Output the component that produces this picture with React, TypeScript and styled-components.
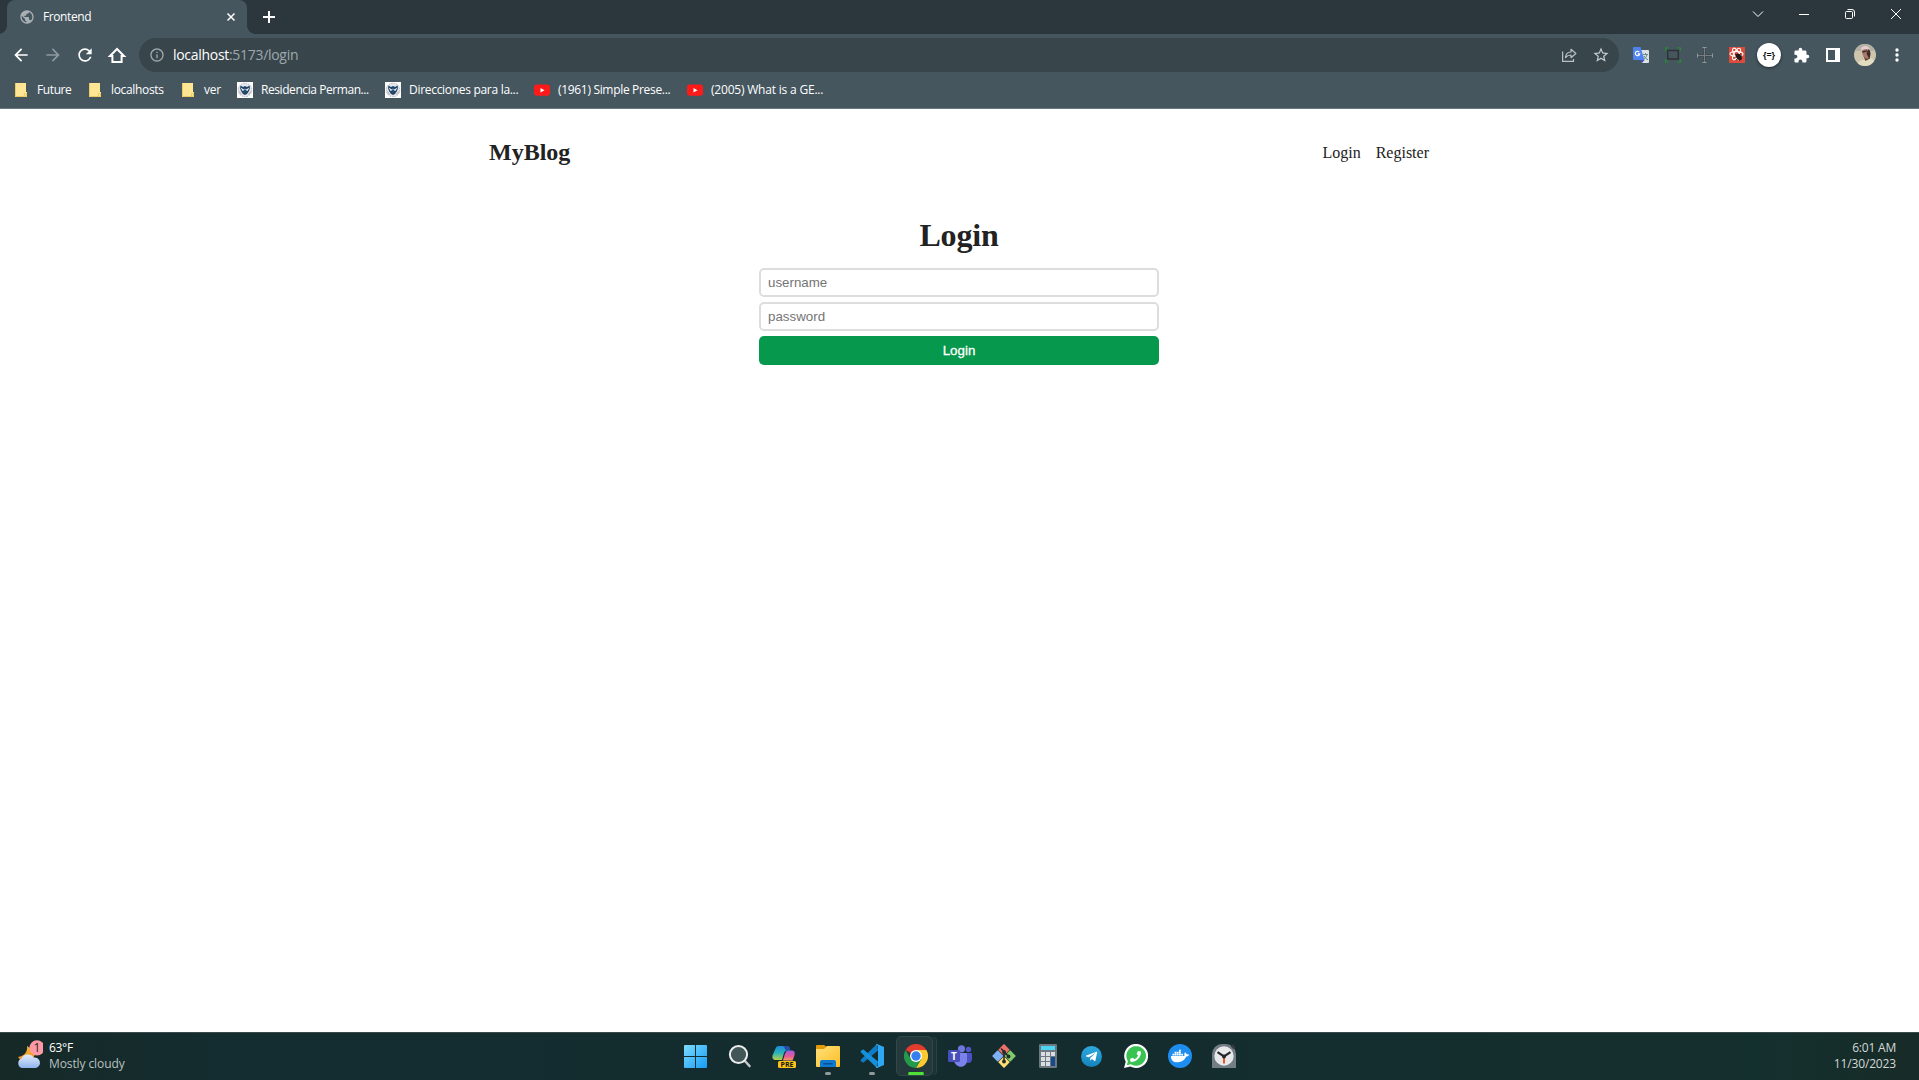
import React from "react";
import styled, { createGlobalStyle } from "styled-components";
import {
  MdArrowBack,
  MdArrowForward,
  MdExtension,
  MdInfoOutline,
  MdPublic,
  MdRefresh,
  MdStarBorder,
} from "react-icons/md";
import { FaDocker, FaPhoneAlt, FaTelegramPlane } from "react-icons/fa";

const uiFont = `"Open Sans", "Noto Sans", sans-serif`;

const GlobalStyle = createGlobalStyle`
  *, *::before, *::after { box-sizing: border-box; }
  body { margin: 0; background: #fff; overflow: hidden; }
  svg { display: block; flex: none; }
`;

const Screen = styled.div`
  display: flex;
  flex-direction: column;
  height: 100vh;
`;

/* ---------- browser window ---------- */

const TabStrip = styled.div`
  display: flex;
  height: 34px;
  flex: none;
  padding-left: 7px;
  background: #2c373d;
  font-family: ${uiFont};
`;

const Tab = styled.div`
  position: relative;
  display: flex;
  align-items: center;
  width: 240px;
  padding: 0 10px 0 12px;
  background: #45565f;
  border-radius: 8px 8px 0 0;
  color: #fff;
  font-size: 12px;
  &::before, &::after {
    content: "";
    position: absolute;
    bottom: 0;
    width: 8px;
    height: 8px;
  }
  &::before { left: -8px; background: radial-gradient(circle at 0 0, #2c373d 7.5px, #45565f 8px); }
  &::after { right: -8px; background: radial-gradient(circle at 100% 0, #2c373d 7.5px, #45565f 8px); }
`;

const Label = styled.span<{ $spacing?: number }>`
  white-space: nowrap;
  letter-spacing: ${(p) => p.$spacing ?? 0}px;
  font-size: 12px;
`;

const TabTitle = styled(Label)`
  flex: 1;
  margin-left: 8px;
  line-height: 16px;
`;

const NewTab = styled.div`
  display: grid;
  place-items: center;
  width: 28px;
  height: 28px;
  margin: 3px 0 0 8px;
`;

const WindowButtons = styled.div`
  display: flex;
  height: 28px;
  margin-left: auto;
`;

const WindowButton = styled.div`
  display: grid;
  place-items: center;
  width: 46px;
`;

const Toolbar = styled.div`
  display: flex;
  align-items: center;
  flex: none;
  height: 38px;
  padding: 4px 6px 0 5px;
  background: #45565f;
  font-family: ${uiFont};
`;

const ToolButton = styled.div<{ $color?: string }>`
  display: grid;
  place-items: center;
  width: 32px;
  height: 34px;
  flex: none;
  color: ${(p) => p.$color ?? "#fff"};
`;

const Omnibox = styled.div`
  display: flex;
  align-items: center;
  flex: 1;
  height: 34px;
  margin: 0 6px;
  padding: 0 2px 0 10px;
  background: #38454b;
  border-radius: 17px;
  color: #9fa8ad;
`;

const Url = styled.span`
  flex: 1;
  margin-left: 8px;
  font-size: 14px;
  letter-spacing: -0.3px;
  line-height: 20px;
  b { font-weight: 400; color: #fff; }
`;

const Badge = styled.div`
  display: grid;
  place-items: center;
  width: 24px;
  height: 24px;
  border-radius: 50%;
  background: #fff;
  box-shadow: 0 1px 3px #0008;
  color: #111;
  font: 700 9px ${uiFont};
  line-height: 22px;
`;

const Bookmarks = styled.div`
  display: flex;
  flex: none;
  height: 37px;
  padding: 0 15px 1px;
  background: #45565f;
  border-bottom: 1px solid #6a7a82;
  font-family: ${uiFont};
  color: #fff;
`;

const Bookmark = styled.div<{ $width: number; $gap: number }>`
  display: flex;
  align-items: center;
  gap: ${(p) => p.$gap}px;
  width: ${(p) => p.$width}px;
  flex: none;
`;

/* ---------- blog page ---------- */

const Page = styled.main`
  flex: 1;
  width: 961px;
  margin: 0 auto;
  padding: 28px 11px 0 10px;
  font-family: "Liberation Serif", serif;
  color: #222;
`;

const PageHeader = styled.header`
  display: flex;
  justify-content: space-between;
  align-items: center;
  height: 30px;
  margin-bottom: 50px;
`;

const Logo = styled.a`
  font-size: 24px;
  font-weight: 700;
`;

const Nav = styled.nav`
  display: flex;
  gap: 15px;
  padding-top: 2px;
  font-size: 16px;
`;

const LoginForm = styled.form`
  display: flex;
  flex-direction: column;
  gap: 5px;
  width: 400px;
  margin: 0 auto;
`;

const Title = styled.h1`
  margin: 0 0 9px;
  font-size: 32px;
  line-height: 37px;
  letter-spacing: -0.2px;
  text-align: center;
`;

const Field = styled.input`
  height: 29px;
  padding: 5px 7px;
  border: 2px solid #ddd;
  border-radius: 5px;
  background: #fff;
  font: 13.333px "Liberation Sans", sans-serif;
  &::placeholder { color: #757575; }
`;

const Submit = styled.button`
  height: 29px;
  padding: 0;
  border: 0;
  border-radius: 5px;
  background: #06984d;
  color: #fff;
  font: 13.333px "Liberation Sans", sans-serif;
  -webkit-text-stroke: 0.3px #fff;
`;

/* ---------- taskbar ---------- */

const Taskbar = styled.footer`
  display: grid;
  grid-template-columns: 1fr 572px 1fr;
  flex: none;
  height: 48px;
  border-top: 1px solid #3b4b4c;
  background: linear-gradient(90deg, #162927, #142d30 12%, #142c2e 60%, #14302e 92%, #172b27);
  font-family: ${uiFont};
  color: #fff;
`;

const Weather = styled.div`
  display: flex;
  align-items: center;
  gap: 6px;
  padding: 0 0 2px 16px;
`;

const Lines = styled.div<{ $right?: boolean; $dim?: string }>`
  display: flex;
  flex-direction: column;
  text-align: ${(p) => (p.$right ? "right" : "left")};
  line-height: 16px;
  color: ${(p) => p.$dim ?? "#fff"};
`;

const Dim = styled(Label)`
  color: #b9c1c1;
`;

const Clock = styled.div`
  display: flex;
  justify-content: flex-end;
  align-items: center;
  padding: 0 23px 2px 0;
`;

const Apps = styled.div`
  display: flex;
`;

const TaskbarApp = styled.div<{ $active?: boolean; $mark?: string }>`
  position: relative;
  display: grid;
  place-items: center;
  width: 44px;
  padding-bottom: 1px;
  &::before {
    content: "";
    display: ${(p) => (p.$active ? "block" : "none")};
    position: absolute;
    inset: 3px 5px 4px 2px;
    border-radius: 5px;
    background: #24393b;
    border: 1px solid #31474a;
    box-shadow: 4px 0 0 -1px #1c3335, 5px 0 0 -1px #2b4144;
  }
  &::after {
    content: "";
    display: ${(p) => (p.$mark ? "block" : "none")};
    position: absolute;
    bottom: 5px;
    left: ${(p) => (p.$active ? 14 : 19)}px;
    width: ${(p) => (p.$active ? 16 : 6)}px;
    height: 3px;
    border-radius: 2px;
    background: ${(p) => p.$mark};
  }
  svg { position: relative; }
`;

const Disc = styled.div<{ $size: number; $bg: string }>`
  display: grid;
  place-items: center;
  width: ${(p) => p.$size}px;
  height: ${(p) => p.$size}px;
  border-radius: 50%;
  background: ${(p) => p.$bg};
`;

/* ---------- drawings ---------- */

const Folder = () => (
  <svg width="12" height="14" viewBox="0 0 12 14">
    <path d="M0 0H11V9H12V14H0Z" fill="#ffe694" />
    <path d="M.5 0V13.5H9.5V10.5H11.5V13.5H9.5" fill="none" stroke="#eccb60" />
  </svg>
);

const Seal = () => (
  <svg width="16" height="16" viewBox="0 0 16 16">
    <path fill="#fff" d="M0 0h16v16H0z" />
    <circle cx="8" cy="8" r="6.8" fill="#e3e7eb" stroke="#a8b4bf" strokeDasharray="1.5 1" />
    <path d="M3.500 3.500 6 5 8 4l2 1 2.500-1.500L13 6l-1 3-2 3-2 1-2-1-2-3-1-3Z" fill="#1d4468" />
    <path d="M3.500 5.500 7 7.500l1-1 1 1 3.500-2-2 3.500L8 8 5.500 9Z" fill="#dfe8ee" />
    <path d="M7 7.500h2v3l-1 1-1-1Z" fill="#244b70" />
    <path d="M2.500 9.500l2 3M13.500 9.500l-2 3" stroke="#cf7b7b" strokeWidth=".7" />
  </svg>
);

const YouTube = () => (
  <svg width="16" height="16" viewBox="0 0 16 16">
    <rect y="2.500" width="16" height="11.300" rx="2.800" fill="#ff1a1a" />
    <path d="m6.500 6 4 2.200-4 2.200Z" fill="#fff" />
  </svg>
);

const Share = () => (
  <svg width="16" height="16" viewBox="0 0 16 16" fill="none" stroke="#b9c1c5" strokeWidth="1.200">
    <path d="M1.600 4.500V14.400H12.500V12" />
    <path d="M4.500 10.500C4.800 7 6.500 5.100 10 5V2.300L14.900 6.500 10 10.700V8C7.500 8 6 8.700 4.500 10.500Z" strokeLinejoin="round" />
  </svg>
);

const Home = () => (
  <svg width="20" height="20" viewBox="0 0 20 20" fill="none" stroke="#fff" strokeWidth="2">
    <path d="M3 11 10 4 17 11H14.600V17H5.400V11Z" />
  </svg>
);

const Translate = () => (
  <svg width="16" height="16" viewBox="0 0 16 16">
    <path d="M6 3h9a1 1 0 0 1 1 1V15a1 1 0 0 1-1 1H9Z" fill="#dfe2e5" />
    <path d="M10 7.500H15M12.500 6v1.500M14 7.500c-.5 2.500-2 4-3.500 5M11 9c1 2 2.500 3 4 3.800" stroke="#68878b" fill="none" />
    <path d="M1 0h6.500L11.500 13H1a1 1 0 0 1-1-1V1a1 1 0 0 1 1-1Z" fill="#4f83ee" />
    <path d="M7.500 13H11.500L9 16Z" fill="#3f4fc0" />
    <path d="M6.200 5A2.200 2.200 0 1 0 6.700 6.800H4.700" stroke="#fff" strokeWidth="1.200" fill="none" />
  </svg>
);

const ScreenCapture = () => (
  <svg width="16" height="16" viewBox="0 0 16 16" fill="none">
    <path d="M.7 4V.9H3.500M12.500.9h2.800V4M15.300 12v3.100H12.500M3.500 15.100H.7V12" stroke="#2a8735" strokeWidth="1.400" />
    <rect x="2.700" y="3.500" width="10.600" height="8.500" stroke="#2e3335" strokeWidth="1.500" />
  </svg>
);

const Crosshair = () => (
  <svg width="16" height="16" viewBox="0 0 16 16" stroke="#92989b" fill="none">
    <path d="M7.500 1v14M1 8.500h14" stroke="#747d81" />
    <path d="M5.500.5h4M5.500 15.500h4M.5 6.500v4M15.500 6.500v4" />
    <path d="M2 7.500h4.500V2M8.500 2v5.500H14M2 9.500h4.500V14M8.500 14V9.500H14" stroke="#3f484c" strokeWidth=".7" />
  </svg>
);

const ReactBug = () => (
  <svg width="16" height="16" viewBox="0 0 16 16">
    <path fill="#dc4b3b" d="M0 0h16v16H0z" />
    <g fill="none" stroke="#fff" strokeWidth="1.100">
      <ellipse cx="7.500" cy="7" rx="6.500" ry="2.500" />
      <ellipse cx="7.500" cy="7" rx="6.500" ry="2.500" transform="rotate(60 7.500 7)" />
      <ellipse cx="7.500" cy="7" rx="6.500" ry="2.500" transform="rotate(120 7.500 7)" />
    </g>
    <ellipse cx="9.800" cy="9.800" rx="2.500" ry="3.500" transform="rotate(-40 9.800 9.800)" fill="#241615" />
    <path d="M6 10.500l6-4M7 13l6-4.500M10 14l3-2.500M6 7l2 1" stroke="#241615" strokeWidth=".8" />
  </svg>
);

const SidePanel = () => (
  <svg width="14" height="14" viewBox="0 0 14 14">
    <path d="M0 0h14v14H0zM2 2v10h7V2z" fill="#fff" fillRule="evenodd" />
  </svg>
);

const Avatar = () => (
  <svg width="22" height="22" viewBox="0 0 22 22">
    <clipPath id="face"><circle cx="11" cy="11" r="11" /></clipPath>
    <g clipPath="url(#face)">
      <path fill="#cdc6ac" d="M0 0h22v22H0z" />
      <path fill="#b3b1a3" d="M0 0h22v7H0z" />
      <path d="M3 22c1-5 4-6 7-6l6-2c4 1 5 4 6 8Z" fill="#e2dcc0" />
      <path d="m9.500 12 6-1 .5 3.500L11.500 17Z" fill="#5f4136" />
      <ellipse cx="12" cy="9.500" rx="3.600" ry="5.500" transform="rotate(-22 12 9.500)" fill="#a8796a" />
      <path d="M14.500 4.500c2.500 3 2.500 7 .5 10l-2.500-5Z" fill="#3d2c29" />
      <path d="M7 6.500C6.500 2.500 11 .5 14.500 3l1.800 3C13 4.500 10 5 7 6.500Z" fill="#e5cdd2" />
      <path d="M8.500 8 13 6.800" stroke="#3b2927" strokeWidth="1.300" />
    </g>
  </svg>
);

const Dots = () => (
  <svg width="4" height="14" viewBox="0 0 4 14" fill="#fff">
    <circle cx="2" cy="2" r="1.700" /><circle cx="2" cy="7" r="1.700" /><circle cx="2" cy="12" r="1.700" />
  </svg>
);

const WeatherIcon = () => (
  <svg width="27" height="32" viewBox="0 0 27 32">
    <defs>
      <linearGradient id="cloud" x2="0" y2="1"><stop stopColor="#e4edfb" /><stop offset="1" stopColor="#8fb4ee" /></linearGradient>
      <linearGradient id="moon" x2="0" y2="1"><stop stopColor="#f5b92c" /><stop offset="1" stopColor="#ed8c27" /></linearGradient>
    </defs>
    <path d="M11 6c1 6-3 10-9 11 3 5 9 7 14 4l4-9Z" fill="url(#moon)" />
    <path d="M6 28a5 5 0 0 1-.5-9.500C7 14 15 13 17.500 17.500A5.400 5.400 0 0 1 20 28Z" fill="url(#cloud)" />
    <circle cx="21" cy="7.800" r="7.600" fill="#ff99a4" />
    <text x="21" y="12" textAnchor="middle" fontSize="12" fontFamily="Open Sans, sans-serif" fill="#26292d">1</text>
  </svg>
);

const Windows = () => (
  <svg width="23" height="23" viewBox="0 0 23 23">
    <defs><linearGradient id="win" x2="1" y2="1"><stop stopColor="#7ddcff" /><stop offset="1" stopColor="#159cf4" /></linearGradient></defs>
    <path d="M0 1q0-1 1-1H11V11H0ZM12 0H22q1 0 1 1V11H12ZM0 12H11V23H1q-1 0-1-1ZM12 12H23V22q0 1-1 1H12Z" fill="url(#win)" />
  </svg>
);

const Search = () => (
  <svg width="24" height="24" viewBox="0 0 24 24">
    <path d="m16.500 16.500 5 5.500" stroke="#c4c7c8" strokeWidth="2.600" strokeLinecap="round" />
    <circle cx="10.500" cy="10.500" r="8.600" fill="#425657" stroke="#eceded" strokeWidth="2" />
  </svg>
);

const Copilot = () => (
  <svg width="24" height="24" viewBox="0 0 24 24">
    <defs>
      <linearGradient id="cpA" x2="0" y2="1"><stop stopColor="#2187dd" /><stop offset=".5" stopColor="#28b4b8" /><stop offset="1" stopColor="#b8cf4a" /></linearGradient>
      <linearGradient id="cpB" x2="0" y2="1"><stop stopColor="#a25ce8" /><stop offset=".6" stopColor="#ea5a93" /><stop offset="1" stopColor="#f7a15f" /></linearGradient>
    </defs>
    <path d="M15 6.500h5c3 0 3 3 2.300 5.500L20.500 16.500H11l2-7Z" fill="url(#cpB)" />
    <path d="M7 2h8c2 0 2.500 1 3 4.500h-3c-2 0-2.500 1-3.500 4L10 16H4c-3 0-4-2-3.500-4.500L3.500 4.500C4.200 2.800 5 2 7 2Z" fill="url(#cpA)" />
    <path d="M10.500 2H15c2 0 2.500 1 3 4.500h-3c-1.500 0-2-1-2.400-2.500-.4-1.200-1-2-2.100-2Z" fill="#264dae" />
    <rect x="6" y="17" width="18" height="7" rx="1.500" fill="#fdc414" />
    <text x="15" y="23.100" textAnchor="middle" fontSize="7" fontWeight="700" fontFamily="Open Sans, sans-serif" fill="#171717">PRE</text>
  </svg>
);

const Explorer = () => (
  <svg width="24" height="22" viewBox="0 0 24 22">
    <defs><linearGradient id="fold" x2="1" y2="1"><stop stopColor="#ffe07a" /><stop offset="1" stopColor="#fcbf24" /></linearGradient></defs>
    <path d="M0 1q0-1 1-1H8l3 2-2 3H0Z" fill="#e09a0a" />
    <path d="M0 4H8l3-3H23q1 0 1 1V21q0 1-1 1H1q-1 0-1-1Z" fill="url(#fold)" />
    <path d="M4 22V17q0-2 2-2H18q2 0 2 2V22Z" fill="#0c79d2" />
    <path d="M8 18.700h8" stroke="#0b4f91" strokeWidth="1.500" strokeLinecap="round" />
  </svg>
);

const VsCode = () => (
  <svg width="24" height="24" viewBox="0 0 24 24">
    <path d="M17 0 1 15.500q-1 1 0 1.800l1.400 1q.7.500 1.400 0L18 6.500Z" fill="#0f7cc6" />
    <path d="M17 24 1 8.500q-1-1 0-1.800l1.400-1q.7-.5 1.400 0L18 17.500Z" fill="#1490dc" />
    <path d="M17 0 24 3V21L17 24q-.8 0-1.300-.6L18 22V2L15.700.6Q16.200 0 17 0Z" fill="#2ea8f3" />
  </svg>
);

const Chrome = () => (
  <svg width="24" height="24" viewBox="0 0 24 24">
    <path d="M12 12 1.600 6A12 12 0 0 1 22.400 6Z" fill="#e33b2e" />
    <path d="M12 6H22.400A12 12 0 0 1 12 24L17.200 15Z" fill="#fccb2f" />
    <path d="M1.600 6A12 12 0 0 0 12 24L17.200 15 12 12 6.800 15Z" fill="#249a4b" />
    <circle cx="12" cy="12" r="6" fill="#fff" />
    <circle cx="12" cy="12" r="4.700" fill="#357ff0" />
  </svg>
);

const Teams = () => (
  <svg width="24" height="22" viewBox="0 0 24 22">
    <circle cx="20.500" cy="4.500" r="2.700" fill="#5059c9" />
    <circle cx="13.500" cy="3.800" r="3.600" fill="#7177dc" />
    <path d="M17 8h6q1 0 1 1v5c0 4-4 5-7 3Z" fill="#4b52c4" />
    <path d="M7 8h11q1 0 1 1v6c0 9-12 9-13 0Z" fill="#7b83eb" />
    <rect y="5" width="12" height="12" rx="1.200" fill="#484fb9" />
    <text x="6" y="14.500" textAnchor="middle" fontSize="10" fontWeight="700" fontFamily="Open Sans, sans-serif" fill="#fff">T</text>
  </svg>
);

const Git = () => (
  <svg width="24" height="24" viewBox="0 0 24 24">
    <g transform="rotate(45 12 12)">
      <rect x="3.500" y="3.500" width="8.200" height="8.200" rx=".5" fill="#ef7069" />
      <rect x="12.300" y="3.500" width="8.200" height="8.200" rx=".5" fill="#82c96a" />
      <rect x="3.500" y="12.300" width="8.200" height="8.200" rx=".5" fill="#81b1f5" />
      <rect x="12.300" y="12.300" width="8.200" height="8.200" rx=".5" fill="#ffdf73" />
    </g>
    <path d="M9 4.500 12 7.500V18M12 7.500 16.500 12.500" stroke="#222c2d" strokeWidth="1.500" fill="none" />
    <g fill="#222c2d"><circle cx="12" cy="8" r="1.900" /><circle cx="16.500" cy="12.500" r="1.900" /><circle cx="12" cy="17.500" r="1.900" /></g>
  </svg>
);

const Calculator = () => (
  <svg width="18" height="24" viewBox="0 0 18 24">
    <rect width="18" height="24" rx="1.200" fill="#6d7880" />
    <rect x="2" y="2" width="14" height="4" fill="#4cd5f3" />
    <path d="M2 8h4v4H2zM7 8h4v4H7zM12 8h4v4h-4zM2 13h4v4H2zM7 13h4v4H7zM2 18h4v4H2zM7 18h4v4H7z" fill="#d9dee2" />
    <path d="M12 13h4v9h-4z" fill="#174a8b" />
  </svg>
);

const WhatsAppBubble = styled.div`
  position: relative;
  display: grid;
  place-items: center;
  width: 24px;
  height: 24px;
  > svg:first-child { position: absolute; inset: 0; }
  > svg:last-child { transform: scaleX(-1); }
`;

const WhatsApp = () => (
  <WhatsAppBubble>
    <svg width="24" height="24" viewBox="0 0 24 24">
      <path d="M0 24 1.700 17.800A12 12 0 1 1 6.300 22.400Z" fill="#fff" />
      <path d="M2.800 21.200 3.900 17.200A9.800 9.800 0 1 1 6.900 20.200Z" fill="#38c352" />
    </svg>
    <FaPhoneAlt size={11} color="#fff" />
  </WhatsAppBubble>
);

const AlarmClock = () => (
  <svg width="24" height="24" viewBox="0 0 24 24">
    <path d="M0 24V10A10 10 0 0 1 10 0h4A10 10 0 0 1 24 10V24Z" fill="#737d86" />
    <path d="m18.500 2 2.500-1.500L23.500 4 21 5Z" fill="#363c40" />
    <circle cx="12" cy="12" r="9.700" fill="#e6e8ea" />
    <path d="M12 13v6.500" stroke="#e6532c" strokeWidth="2" />
    <path d="m5.500 8.200 6.500 4.300 6.500-4.300" fill="none" stroke="#25282b" strokeWidth="2.200" />
    <circle cx="12" cy="12.500" r="2" fill="#25282b" />
  </svg>
);

const bookmarks = [
  { icon: <Folder />, text: "Future", width: 74, gap: 10, spacing: -0.4 },
  { icon: <Folder />, text: "localhosts", width: 93, gap: 10, spacing: -0.33 },
  { icon: <Folder />, text: "ver", width: 55, gap: 10, spacing: -0.3 },
  { icon: <Seal />, text: "Residencia Perman...", width: 148, gap: 8, spacing: -0.43 },
  { icon: <Seal />, text: "Direcciones para la...", width: 149, gap: 8, spacing: -0.3 },
  { icon: <YouTube />, text: "(1961) Simple Prese...", width: 153, gap: 8, spacing: -0.32 },
  { icon: <YouTube />, text: "(2005) What is a GE...", width: 150, gap: 8, spacing: -0.2 },
];

export default function App() {
  return (
    <Screen>
      <GlobalStyle />
      <TabStrip>
        <Tab>
          <MdPublic size={16} color="#a9b0b4" />
          <TabTitle $spacing={-0.4}>Frontend</TabTitle>
          <svg width="12" height="12" viewBox="0 0 12 12" stroke="#fff" strokeWidth="1.500">
            <path d="m2.500 2.500 7 7m0-7-7 7" />
          </svg>
        </Tab>
        <NewTab>
          <svg width="12" height="12" viewBox="0 0 12 12" stroke="#fff" strokeWidth="2"><path d="M6 0v12M0 6h12" /></svg>
        </NewTab>
        <WindowButtons>
          <WindowButton>
            <svg width="12" height="12" viewBox="0 0 12 12" stroke="#fff" fill="none"><path d="m1 3.500 5 5 5-5" /></svg>
          </WindowButton>
          <WindowButton>
            <svg width="10" height="10" viewBox="0 0 10 10" stroke="#fff"><path d="M0 5.500h10" /></svg>
          </WindowButton>
          <WindowButton>
            <svg width="10" height="10" viewBox="0 0 10 10" stroke="#fff" fill="none">
              <rect x=".5" y="2.500" width="7" height="7" rx="1" />
              <path d="M2.500.5H7q2.500 0 2.500 2.500V7.500" />
            </svg>
          </WindowButton>
          <WindowButton>
            <svg width="10" height="10" viewBox="0 0 10 10" stroke="#fff"><path d="m0 0 10 10M10 0 0 10" /></svg>
          </WindowButton>
        </WindowButtons>
      </TabStrip>

      <Toolbar>
        <ToolButton><MdArrowBack size={20} /></ToolButton>
        <ToolButton $color="#8f999f"><MdArrowForward size={20} /></ToolButton>
        <ToolButton><MdRefresh size={20} /></ToolButton>
        <ToolButton><Home /></ToolButton>
        <Omnibox>
          <MdInfoOutline size={16} />
          <Url><b>localhost</b>:5173/login</Url>
          <ToolButton><Share /></ToolButton>
          <ToolButton $color="#c5cccf"><MdStarBorder size={18} /></ToolButton>
        </Omnibox>
        <ToolButton><Translate /></ToolButton>
        <ToolButton><ScreenCapture /></ToolButton>
        <ToolButton><Crosshair /></ToolButton>
        <ToolButton><ReactBug /></ToolButton>
        <ToolButton><Badge>{"{=}"}</Badge></ToolButton>
        <ToolButton><MdExtension size={17} /></ToolButton>
        <ToolButton><SidePanel /></ToolButton>
        <ToolButton><Avatar /></ToolButton>
        <ToolButton><Dots /></ToolButton>
      </Toolbar>

      <Bookmarks>
        {bookmarks.map((b) => (
          <Bookmark key={b.text} $width={b.width} $gap={b.gap}>
            {b.icon}
            <Label $spacing={b.spacing}>{b.text}</Label>
          </Bookmark>
        ))}
      </Bookmarks>

      <Page>
        <PageHeader>
          <Logo>MyBlog</Logo>
          <Nav>
            <a>Login</a>
            <a>Register</a>
          </Nav>
        </PageHeader>
        <LoginForm>
          <Title>Login</Title>
          <Field placeholder="username" />
          <Field type="password" placeholder="password" />
          <Submit type="button">Login</Submit>
        </LoginForm>
      </Page>

      <Taskbar>
        <Weather>
          <WeatherIcon />
          <Lines>
            <Label $spacing={-0.3}>63°F</Label>
            <Dim $spacing={-0.1}>Mostly cloudy</Dim>
          </Lines>
        </Weather>
        <Apps>
          <TaskbarApp><Windows /></TaskbarApp>
          <TaskbarApp><Search /></TaskbarApp>
          <TaskbarApp><Copilot /></TaskbarApp>
          <TaskbarApp $mark="#929b9c"><Explorer /></TaskbarApp>
          <TaskbarApp $mark="#929b9c"><VsCode /></TaskbarApp>
          <TaskbarApp $active $mark="#4fe234"><Chrome /></TaskbarApp>
          <TaskbarApp><Teams /></TaskbarApp>
          <TaskbarApp><Git /></TaskbarApp>
          <TaskbarApp><Calculator /></TaskbarApp>
          <TaskbarApp>
            <Disc $size={21} $bg="linear-gradient(#2ea9e0, #1583bd)"><FaTelegramPlane size={13} color="#fff" /></Disc>
          </TaskbarApp>
          <TaskbarApp><WhatsApp /></TaskbarApp>
          <TaskbarApp>
            <Disc $size={24} $bg="#1e8df0"><FaDocker size={18} color="#fff" /></Disc>
          </TaskbarApp>
          <TaskbarApp><AlarmClock /></TaskbarApp>
        </Apps>
        <Clock>
          <Lines $right $dim="#d3d8d8">
            <Label $spacing={-0.2}>6:01 AM</Label>
            <Label $spacing={-0.15}>11/30/2023</Label>
          </Lines>
        </Clock>
      </Taskbar>
    </Screen>
  );
}
